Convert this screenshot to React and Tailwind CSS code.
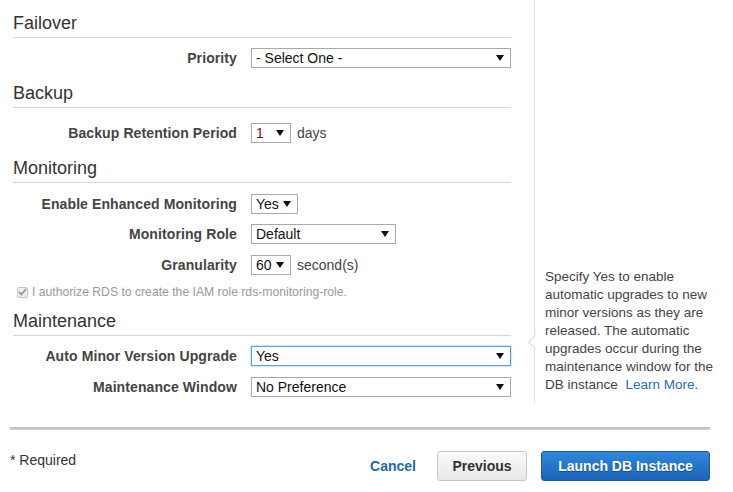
import React from "react";

const Caret = () => (
  <svg width="8" height="6" viewBox="0 0 8 6" className="shrink-0">
    <path d="M0 0 L8 0 L4 6 Z" fill="#111" />
  </svg>
);

const Select = ({ value, width, focused, valueClass }) => (
  <div
    className={`${width} h-[20px] flex items-center justify-between pl-[4px] pr-[6px] bg-white border ${
      focused ? "border-[#5b9dd9] shadow-[0_0_2px_#8ab8ea]" : "border-[#a9a9a9]"
    }`}
  >
    <span className={`text-[14px] leading-none ${valueClass || "text-[#111]"}`}>{value}</span>
    <Caret />
  </div>
);

const Heading = ({ children, className }) => (
  <div className={`text-[18px] leading-[20px] text-[#333] pt-[1px] pb-[4px] border-b border-[#d5d5d5] ${className}`}>
    {children}
  </div>
);

const Row = ({ label, className, children }) => (
  <div className={`flex items-center h-[30px] ${className}`}>
    <div className="w-[224px] text-right text-[14px] font-bold text-[#444] tracking-[0.1px]">{label}</div>
    <div className="ml-[14px] flex items-center gap-[6px]">{children}</div>
  </div>
);

const App = () => {
  return (
    <div className="w-[733px] h-[492px] bg-white font-['Liberation_Sans',Arial,sans-serif] overflow-hidden">
      <div className="flex h-[403px]">
        <div className="w-[534px] pl-[13px] pr-[23px] pt-[12px]">
          <Heading>Failover</Heading>
          <Row label="Priority" className="mt-[5px]">
            <Select value="- Select One -" width="w-[260px]" />
          </Row>

          <Heading className="mt-[9px]">Backup</Heading>
          <Row label="Backup Retention Period" className="mt-[10px]">
            <Select value="1" width="w-[40px]" valueClass="text-[#7a1010]" />
            <span className="text-[14px] text-[#444]">days</span>
          </Row>

          <Heading className="mt-[9px]">Monitoring</Heading>
          <Row label="Enable Enhanced Monitoring" className="mt-[6px]">
            <Select value="Yes" width="w-[47px]" />
          </Row>
          <Row label="Monitoring Role">
            <Select value="Default" width="w-[145px]" />
          </Row>
          <Row label="Granularity" className="mt-[1px]">
            <Select value="60" width="w-[40px]" />
            <span className="text-[14px] text-[#444]">second(s)</span>
          </Row>
          <div className="flex items-center h-[16px] mt-[4px] pl-[4px] gap-[4px]">
            <div className="w-[11px] h-[11px] border border-[#c4c4c4] bg-[#eee] rounded-[2px] flex items-center justify-center">
              <svg width="9" height="8" viewBox="0 0 9 8">
                <path d="M1 4 L3.5 6.5 L8 1" stroke="#999" strokeWidth="1.8" fill="none" />
              </svg>
            </div>
            <span className="text-[12.2px] text-[#9a9a9a]">
              I authorize RDS to create the IAM role rds-monitoring-role.
            </span>
          </div>

          <Heading className="mt-[10px]">Maintenance</Heading>
          <Row label="Auto Minor Version Upgrade" className="mt-[5px]">
            <Select value="Yes" width="w-[260px]" focused />
          </Row>
          <Row label="Maintenance Window" className="mt-[1px]">
            <Select value="No Preference" width="w-[260px]" />
          </Row>
        </div>

        <div className="relative flex-1 border-l border-[#dcdcdc]">
          <div className="absolute left-[-5px] top-[337px] w-[10px] h-[10px] bg-white border-l border-b border-[#dcdcdc] rotate-45" />
          <div className="pt-[268px] pl-[10px] w-[190px] text-[13.5px] leading-[18px] text-[#444]">
            Specify Yes to enable automatic upgrades to new minor versions as they are released. The
            automatic upgrades occur during the maintenance window for the DB instance{" "}
            <a className="inline-block ml-[4px] text-[#2a6ab0]">Learn More</a>.
          </div>
        </div>
      </div>

      <div className="ml-[10px] w-[700px] mt-[24px] h-[3px] bg-[#c4c4c4] border-b border-dotted border-[#e0e0e0]" />

      <div className="flex items-start mt-[21px] pl-[10px] pr-[23px]">
        <div className="text-[14px] text-[#333] leading-[16px] mt-[1px]">* Required</div>
        <div className="ml-auto flex items-center">
          <a className="text-[14px] font-bold text-[#1f66b0] mr-[21px]">Cancel</a>
          <button className="w-[90px] h-[30px] rounded-[3px] border border-[#c6c6c6] bg-gradient-to-b from-[#fbfbfb] to-[#e7e7e7] text-[14px] font-bold text-[#333]">
            Previous
          </button>
          <button className="ml-[14px] w-[169px] h-[30px] rounded-[3px] border border-[#1a5aa6] bg-gradient-to-b from-[#2f88dc] to-[#1b63b8] text-[14px] font-bold text-white [text-shadow:0_1px_1px_rgba(0,0,0,0.35)]">
            Launch DB Instance
          </button>
        </div>
      </div>
    </div>
  );
};

export default App;
